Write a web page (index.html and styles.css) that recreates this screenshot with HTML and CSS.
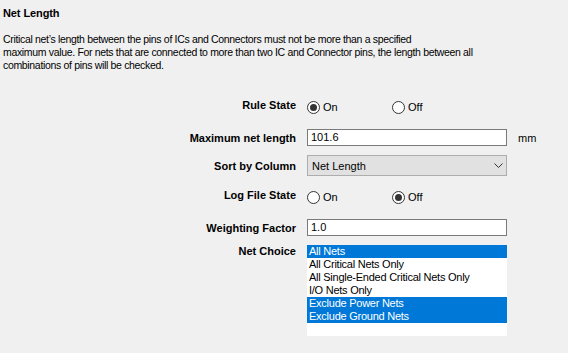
FILE: index.html
```
<!DOCTYPE html>
<html>
<head>
<meta charset="utf-8">
<link rel="stylesheet" href="styles.css">
</head>
<body>
<div class="page">
  <h1 class="title">Net Length</h1>
  <p class="desc">Critical net’s length between the pins of ICs and Connectors must not be more than a specified<br>maximum value. For nets that are connected to more than two IC and Connector pins, the length between all<br>combinations of pins will be checked.</p>

  <div class="form">
    <div class="label row-rule">Rule State</div>
    <div class="radios row-rule">
      <label class="radio"><span class="dot checked"></span>On</label>
      <label class="radio"><span class="dot"></span>Off</label>
    </div>
    <div class="unit row-rule"></div>

    <div class="label row-max">Maximum net length</div>
    <div class="textbox row-max">101.6</div>
    <div class="unit row-max">mm</div>

    <div class="label row-sort">Sort by Column</div>
    <div class="select row-sort"><span>Net Length</span>
      <svg class="chev" width="9" height="5" viewBox="0 0 9 5"><path d="M0.5 0.5 L4.5 4.5 L8.5 0.5" fill="none" stroke="#333" stroke-width="1"/></svg>
    </div>
    <div class="unit row-sort"></div>

    <div class="label row-log">Log File State</div>
    <div class="radios row-log">
      <label class="radio"><span class="dot"></span>On</label>
      <label class="radio"><span class="dot checked"></span>Off</label>
    </div>
    <div class="unit row-log"></div>

    <div class="label row-wf">Weighting Factor</div>
    <div class="textbox row-wf">1.0</div>
    <div class="unit row-wf"></div>

    <div class="label row-nc">Net Choice</div>
    <div class="listbox row-nc">
      <div class="item sel">All Nets</div>
      <div class="item">All Critical Nets Only</div>
      <div class="item">All Single-Ended Critical Nets Only</div>
      <div class="item">I/O Nets Only</div>
      <div class="item sel">Exclude Power Nets</div>
      <div class="item sel">Exclude Ground Nets</div>
    </div>
    <div class="unit row-nc"></div>
  </div>
</div>
</body>
</html>
```

FILE: styles.css
```
* { box-sizing: border-box; }
html, body {
  margin: 0;
  padding: 0;
  background: #f0f0f0;
  font-family: "Liberation Sans", Arial, sans-serif;
  font-size: 11px;
  color: #000;
}
.page {
  padding: 6px 0 0 3px;
  height: 353px;
  overflow: hidden;
}
.title {
  margin: 0;
  font-size: 11px;
  font-weight: bold;
  line-height: 15px;
  letter-spacing: -0.1px;
}
.desc {
  margin: 12px 0 0 0;
  line-height: 13px;
  font-size: 10.5px;
  letter-spacing: -0.33px;
}
.form {
  display: grid;
  grid-template-columns: 293px 200px auto;
  column-gap: 11px;
  margin-top: 27px;
}
.label {
  font-weight: bold;
  text-align: right;
  align-self: center;
}
.unit {
  align-self: center;
}
.row-rule { height: 16px; }
.radios {
  display: flex;
  align-items: center;
}
.radio {
  display: flex;
  align-items: center;
  width: 85px;
  line-height: 13px;
}
.dot {
  width: 13px;
  height: 13px;
  border: 1px solid #333;
  border-radius: 50%;
  background: #fff;
  margin-right: 3px;
  display: flex;
  align-items: center;
  justify-content: center;
}
.dot.checked::after {
  content: "";
  width: 7px;
  height: 7px;
  border-radius: 50%;
  background: #333;
}
.row-max { margin-top: 14px; }
.textbox {
  height: 17px;
  background: #fff;
  border: 1px solid #7a7a7a;
  padding: 0 3px;
  line-height: 15px;
  color: #000;
}
.row-sort { margin-top: 9px; }
.select {
  height: 21px;
  background: #e1e1e1;
  border: 1px solid #adadad;
  display: flex;
  align-items: center;
  justify-content: space-between;
  padding: 0 3px 0 4px;
}
.row-log { margin-top: 13px; height: 16px; }
.row-wf { margin-top: 14px; }
.row-nc { margin-top: 9px; }
.label.row-nc { align-self: start; line-height: 13px; }
.listbox {
  height: 91px;
  background: #fff;
}
.item {
  height: 13px;
  line-height: 13px;
  padding-left: 2px;
  white-space: nowrap;
  letter-spacing: -0.25px;
}
.item.sel {
  background: #0078d7;
  color: #fff;
}
```
